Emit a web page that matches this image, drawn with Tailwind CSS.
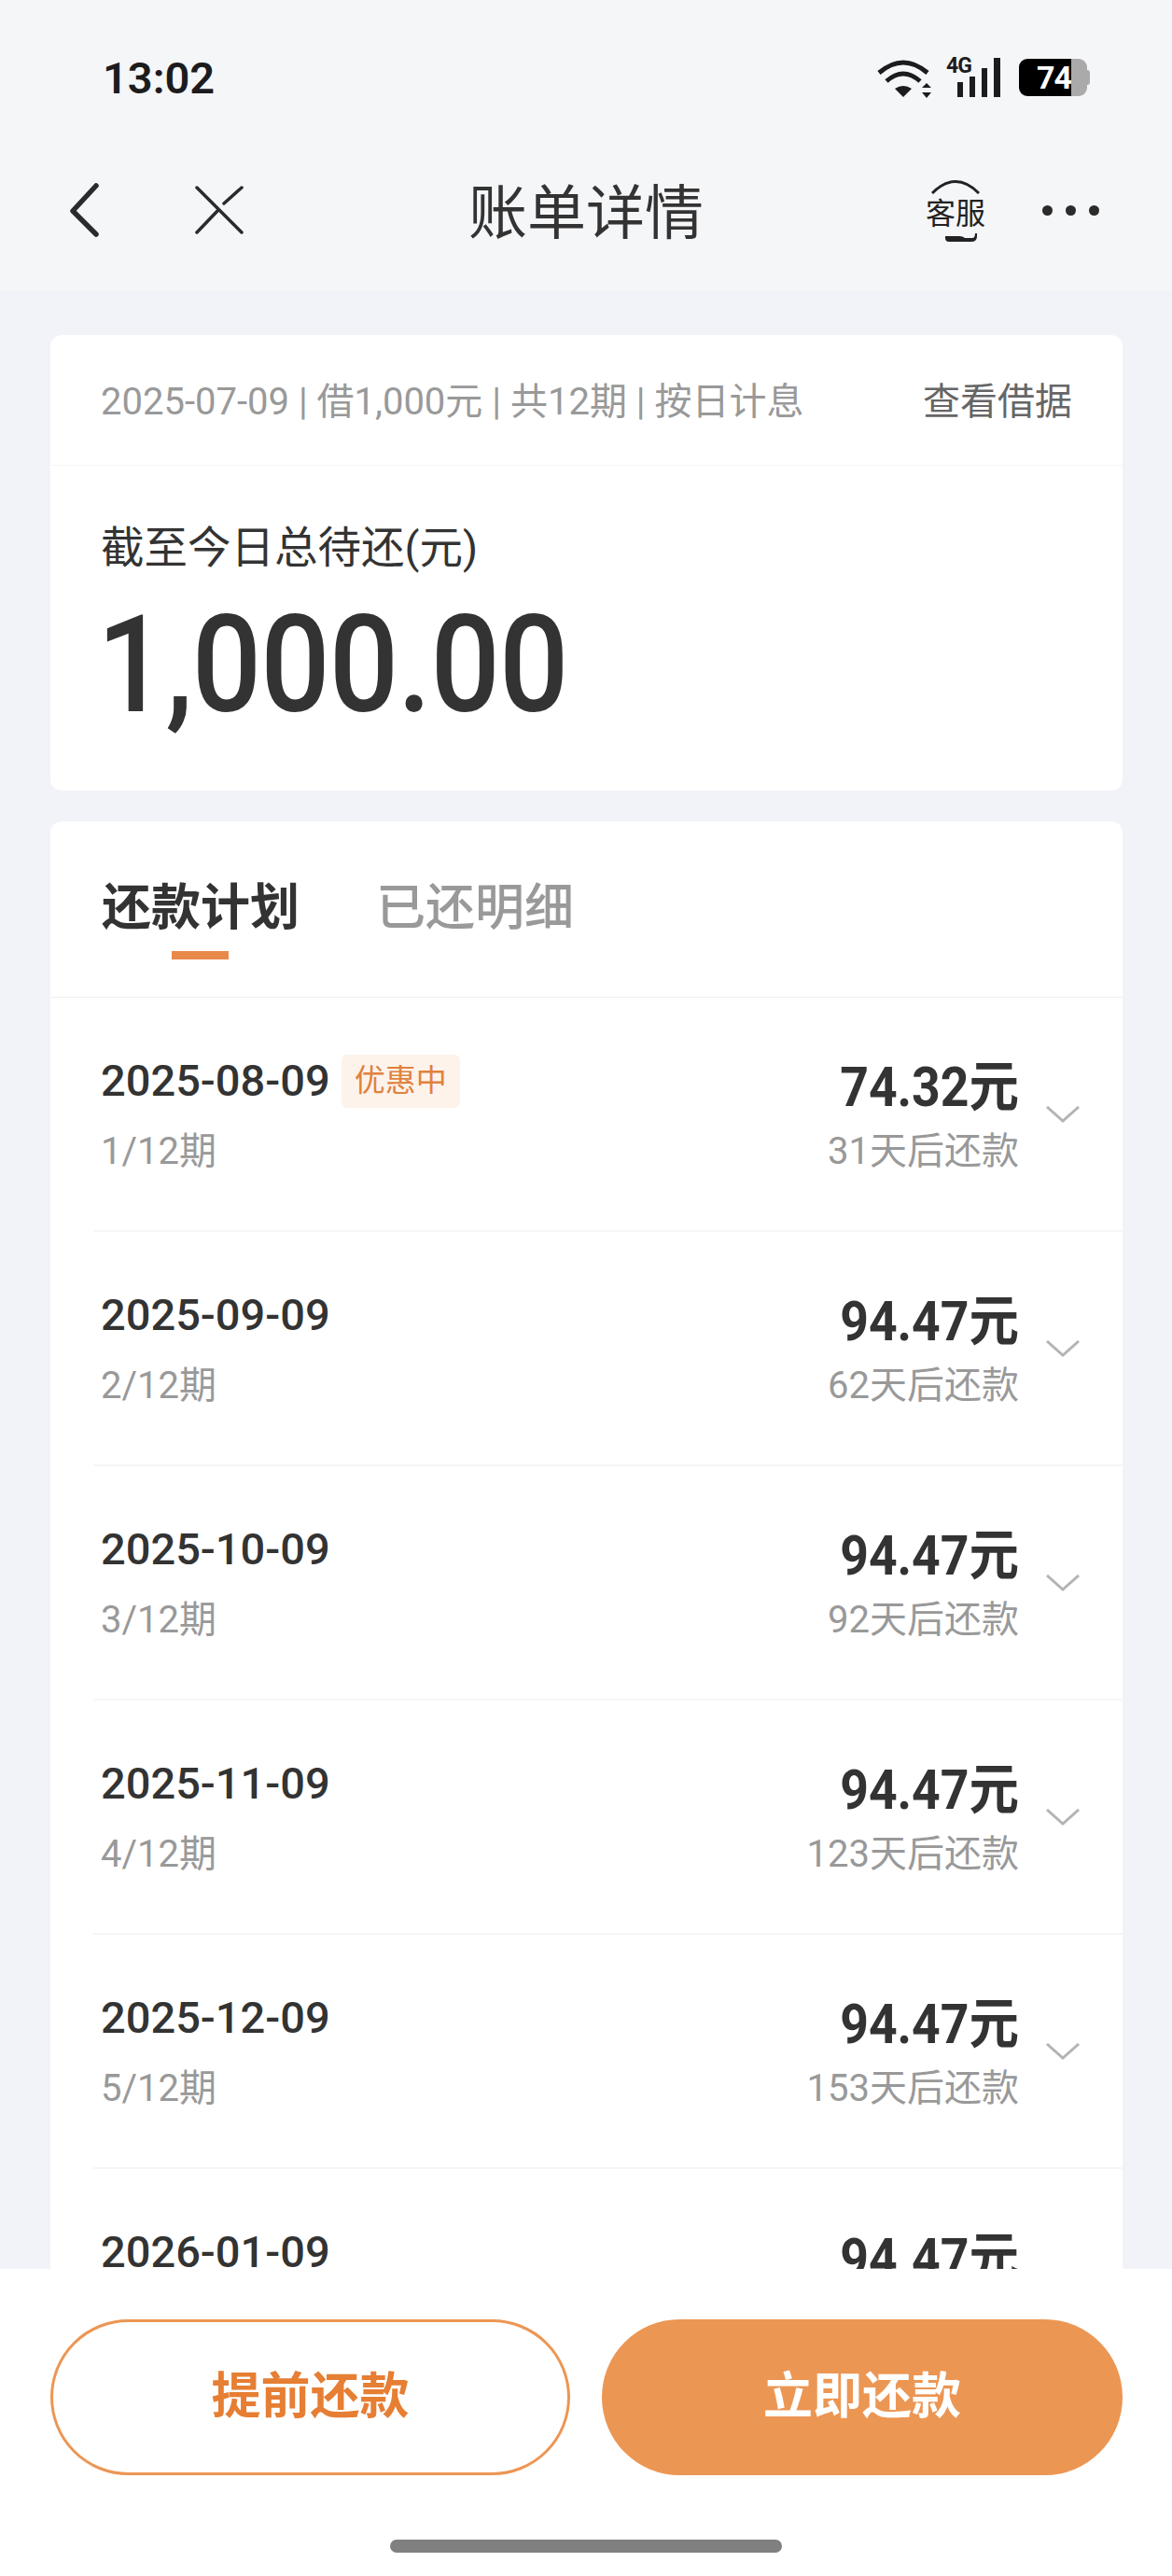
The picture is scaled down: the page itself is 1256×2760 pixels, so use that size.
<!DOCTYPE html>
<html lang="zh-CN">
<head>
<meta charset="UTF-8">
<title>账单详情</title>
<script src="https://cdn.jsdelivr.net/npm/@tailwindcss/browser@4"></script>
</head>
<body class="bg-[#f2f3f8] font-['Roboto','Noto_Sans_CJK_SC',sans-serif] text-[#333]">
<div class="flex h-[2760px] w-[1256px] flex-col overflow-hidden">

  <!-- status bar + nav -->
  <header class="h-[312px] shrink-0 bg-[#f5f6f8]">
    <div class="flex h-[140px] items-start justify-between pl-[110px] pr-[88px] pt-[58px]">
      <span class="text-[47px] leading-[52px] font-semibold text-[#1c1c1e]">13:02</span>
      <div class="flex items-start pt-[2px]">
        <svg class="mt-[3px]" width="60" height="42" viewBox="0 0 60 42" fill="none" stroke="#1c1c1e" stroke-width="5">
          <path d="M2 15Q28 -7 54 15"/>
          <path d="M10 24Q28 8 46 24"/>
          <path d="M28 41L19 32Q28 26 37 32Z" fill="#1c1c1e" stroke="none"/>
          <path d="M53 26L58 31H48ZM53 42L48 36H58Z" fill="#1c1c1e" stroke="none"/>
        </svg>
        <div class="relative ml-[14px] h-[44px] w-[58px]">
          <span class="absolute left-0 top-[-1px] text-[23px] leading-[24px] font-bold tracking-[-1px] text-[#1c1c1e]">4G</span>
          <div class="absolute bottom-0 left-[12px] flex items-end gap-[7px]">
            <i class="block h-[16px] w-[6px] bg-[#1c1c1e]"></i>
            <i class="block h-[22px] w-[6px] bg-[#1c1c1e]"></i>
            <i class="block h-[31px] w-[6px] bg-[#1c1c1e]"></i>
            <i class="block h-[42px] w-[7px] bg-[#1c1c1e]"></i>
          </div>
        </div>
        <div class="relative ml-[20px] mt-[3px] flex h-[40px] w-[76px]">
          <div class="flex h-[40px] w-[56px] items-center justify-end rounded-l-[9px] bg-black text-[34px] leading-[40px] font-bold tracking-[-1px] text-white">74</div>
          <div class="h-[40px] w-[17px] rounded-r-[9px] bg-[#aaa]"></div>
          <div class="mt-[12px] h-[16px] w-[3px] rounded-r-[3px] bg-[#aaa]"></div>
        </div>
      </div>
    </div>
    <nav class="relative flex h-[172px] items-center justify-center">
      <div class="absolute left-[74px] top-[56px] flex items-center gap-[101px]">
        <svg width="34" height="58" viewBox="0 0 34 58" fill="none" stroke="#2b2b2b" stroke-width="5.5" stroke-linecap="round" stroke-linejoin="round"><path d="M29 3L4 30L29 55"/></svg>
        <svg width="52" height="52" viewBox="0 0 52 52" fill="none" stroke="#2b2b2b" stroke-width="3.5" stroke-linecap="round"><path d="M2 2L50 50"/><path d="M2 50L24 27"/><path d="M31 19L50 2"/></svg>
      </div>
      <h1 class="pt-[5px] text-[63px] leading-[72px] font-normal text-[#333]">账单详情</h1>
      <div class="absolute left-[992px] top-[52px] flex h-[68px] w-[64px] flex-col items-center">
        <svg class="shrink-0" width="56" height="16" viewBox="0 0 56 16" fill="none" stroke="#222" stroke-width="3"><path d="M3 15Q28 -10 53 15"/></svg>
        <span class="mt-[4px] text-[32px] leading-[34px] whitespace-nowrap text-[#222]">客服</span>
        <svg class="mt-[4px] ml-[12px] shrink-0" width="36" height="10" viewBox="0 0 36 10"><path d="M1 3H16Q20 3 22 5H30Q33 5 33 0H35V3Q35 9 29 9H5Q1 9 1 5Z" fill="#222"/></svg>
      </div>
      <div class="absolute left-[1117px] top-[80px] flex gap-[14px]">
        <i class="block size-[11px] rounded-full bg-[#2b2b2b]"></i>
        <i class="block size-[11px] rounded-full bg-[#2b2b2b]"></i>
        <i class="block size-[11px] rounded-full bg-[#2b2b2b]"></i>
      </div>
    </nav>
  </header>

  <main class="min-h-0 flex-1 overflow-hidden pl-[54px] pr-[53px] pt-[47px]">
    <section class="rounded-[12px] bg-white">
      <div class="flex h-[140px] items-center justify-between border-b border-[#f5f5f7] px-[54px] pt-[5px]">
        <span class="text-[40px] whitespace-nowrap text-[#999]">2025-07-09 | 借1,000元 | 共12期 | 按日计息</span>
        <span class="text-[40px] whitespace-nowrap text-[#666]">查看借据</span>
      </div>
      <div class="h-[348px] pl-[54px] pt-[58px]">
        <p class="text-[46.5px] leading-[60px] text-[#333]">截至今日总待还(元)</p>
        <p class="ml-[-4px] mt-[25px] scale-y-[1.1] text-[131px] leading-[140px] font-medium tracking-[-1px] text-[#333]">1,000.00</p>
      </div>
    </section>

    <section class="mt-[33px] rounded-t-[12px] bg-white">
      <div class="flex h-[189px] items-start gap-[82px] border-b border-[#f0f0f2] pl-[55px] pt-[62px]">
        <div class="relative">
          <span class="text-[53px] leading-[62px] font-bold text-[#333]">还款计划</span>
          <i class="absolute left-[75px] top-[77px] block h-[9px] w-[61px] bg-[#e8894a]"></i>
        </div>
        <span class="text-[53px] leading-[62px] font-medium text-[#999]">已还明细</span>
      </div>

      <ul>
        <li class="ml-[46px] flex h-[251px] justify-between border-b-[2px] border-[#f6f6f8] pl-[8px]">
          <div class="pt-[57px]">
            <div class="flex items-center gap-[12px]">
              <span class="text-[47px] leading-[64px] font-medium">2025-08-09</span>
              <span class="flex h-[57px] w-[127px] items-center justify-center rounded-[6px] bg-[#fdf3ea] text-[33px] text-[#e0823f]">优惠中</span>
            </div>
            <p class="mt-[16px] text-[40px] leading-[56px] text-[#999]">1/12期</p>
          </div>
          <div class="flex pr-[46px]">
            <div class="pt-[64px] text-right">
              <p class="scale-y-[1.1] text-[53.5px] leading-[64px] font-bold">74.32元</p>
              <p class="mt-[9px] text-[40px] leading-[56px] text-[#999]">31天后还款</p>
            </div>
            <svg class="ml-[29px] mt-[116px]" width="36" height="18" viewBox="0 0 36 18" fill="none" stroke="#b4b4b4" stroke-width="3"><path d="M1 1L18 16L35 1"/></svg>
          </div>
        </li>
        <li class="ml-[46px] flex h-[251px] justify-between border-b-[2px] border-[#f6f6f8] pl-[8px]">
          <div class="pt-[57px]">
            <p class="text-[47px] leading-[64px] font-medium">2025-09-09</p>
            <p class="mt-[16px] text-[40px] leading-[56px] text-[#999]">2/12期</p>
          </div>
          <div class="flex pr-[46px]">
            <div class="pt-[64px] text-right">
              <p class="scale-y-[1.1] text-[53.5px] leading-[64px] font-bold">94.47元</p>
              <p class="mt-[9px] text-[40px] leading-[56px] text-[#999]">62天后还款</p>
            </div>
            <svg class="ml-[29px] mt-[116px]" width="36" height="18" viewBox="0 0 36 18" fill="none" stroke="#b4b4b4" stroke-width="3"><path d="M1 1L18 16L35 1"/></svg>
          </div>
        </li>
        <li class="ml-[46px] flex h-[251px] justify-between border-b-[2px] border-[#f6f6f8] pl-[8px]">
          <div class="pt-[57px]">
            <p class="text-[47px] leading-[64px] font-medium">2025-10-09</p>
            <p class="mt-[16px] text-[40px] leading-[56px] text-[#999]">3/12期</p>
          </div>
          <div class="flex pr-[46px]">
            <div class="pt-[64px] text-right">
              <p class="scale-y-[1.1] text-[53.5px] leading-[64px] font-bold">94.47元</p>
              <p class="mt-[9px] text-[40px] leading-[56px] text-[#999]">92天后还款</p>
            </div>
            <svg class="ml-[29px] mt-[116px]" width="36" height="18" viewBox="0 0 36 18" fill="none" stroke="#b4b4b4" stroke-width="3"><path d="M1 1L18 16L35 1"/></svg>
          </div>
        </li>
        <li class="ml-[46px] flex h-[251px] justify-between border-b-[2px] border-[#f6f6f8] pl-[8px]">
          <div class="pt-[57px]">
            <p class="text-[47px] leading-[64px] font-medium">2025-11-09</p>
            <p class="mt-[16px] text-[40px] leading-[56px] text-[#999]">4/12期</p>
          </div>
          <div class="flex pr-[46px]">
            <div class="pt-[64px] text-right">
              <p class="scale-y-[1.1] text-[53.5px] leading-[64px] font-bold">94.47元</p>
              <p class="mt-[9px] text-[40px] leading-[56px] text-[#999]">123天后还款</p>
            </div>
            <svg class="ml-[29px] mt-[116px]" width="36" height="18" viewBox="0 0 36 18" fill="none" stroke="#b4b4b4" stroke-width="3"><path d="M1 1L18 16L35 1"/></svg>
          </div>
        </li>
        <li class="ml-[46px] flex h-[251px] justify-between border-b-[2px] border-[#f6f6f8] pl-[8px]">
          <div class="pt-[57px]">
            <p class="text-[47px] leading-[64px] font-medium">2025-12-09</p>
            <p class="mt-[16px] text-[40px] leading-[56px] text-[#999]">5/12期</p>
          </div>
          <div class="flex pr-[46px]">
            <div class="pt-[64px] text-right">
              <p class="scale-y-[1.1] text-[53.5px] leading-[64px] font-bold">94.47元</p>
              <p class="mt-[9px] text-[40px] leading-[56px] text-[#999]">153天后还款</p>
            </div>
            <svg class="ml-[29px] mt-[116px]" width="36" height="18" viewBox="0 0 36 18" fill="none" stroke="#b4b4b4" stroke-width="3"><path d="M1 1L18 16L35 1"/></svg>
          </div>
        </li>
        <li class="ml-[46px] flex h-[251px] justify-between pl-[8px]">
          <div class="pt-[57px]">
            <p class="text-[47px] leading-[64px] font-medium">2026-01-09</p>
          </div>
          <div class="flex pr-[111px]">
            <div class="pt-[64px] text-right">
              <p class="scale-y-[1.1] text-[53.5px] leading-[64px] font-bold">94.47元</p>
            </div>
          </div>
        </li>
      </ul>
    </section>
  </main>

  <footer class="relative h-[329px] shrink-0 bg-white pl-[54px] pr-[53px] pt-[54px]">
    <div class="flex gap-[34px]">
      <button class="h-[167px] w-[557px] rounded-full border-[3px] border-[#ec9654] text-[53px] font-bold text-[#e67e33]">提前还款</button>
      <button class="h-[167px] w-[558px] rounded-full bg-[#ec9654] text-[53px] font-bold text-white">立即还款</button>
    </div>
    <div class="absolute bottom-[25px] left-[418px] h-[14px] w-[420px] rounded-full bg-[#808080]"></div>
  </footer>
</div>
</body>
</html>
